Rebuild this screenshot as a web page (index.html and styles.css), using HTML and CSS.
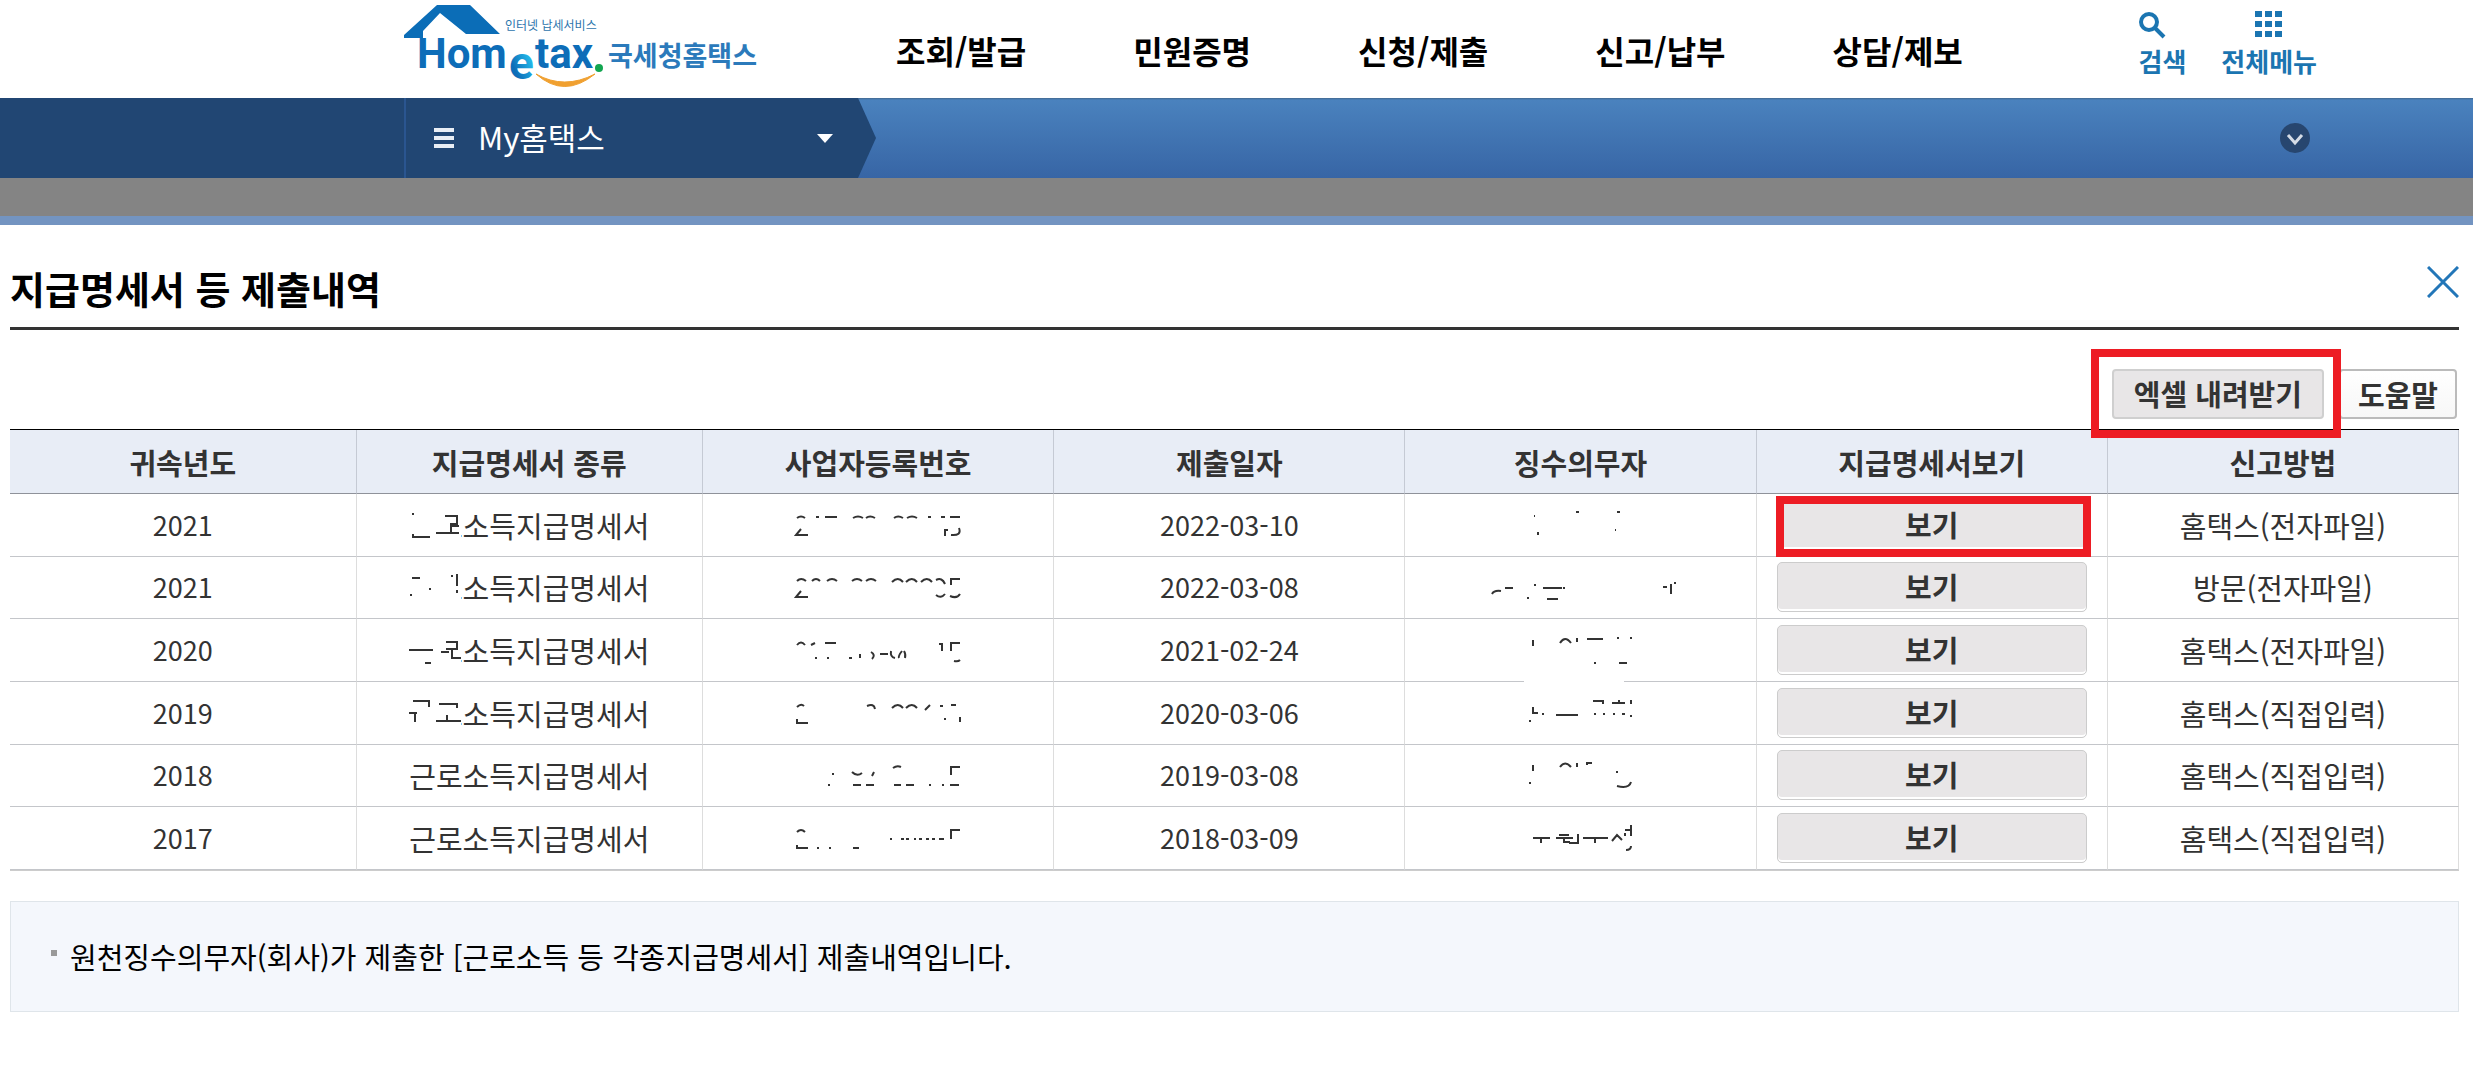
FILE: index.html
```html
<!DOCTYPE html>
<html lang="ko">
<head>
    <meta charset="UTF-8">
    <title>국세청홈택스</title>
    <link rel="stylesheet" href="styles.css">
</head>
<body>
<header class="header">
    <a href="#" class="logo">
        <svg width="360" height="98" viewBox="0 0 360 98">
            <defs>
                <linearGradient id="e" x1="0" y1="1" x2="1" y2="0">
                    <stop offset="0.3" stop-color="#0d6db8"/>
                    <stop offset="0.7" stop-color="#22b4e6"/>
                </linearGradient>
            </defs>
            <path d="M0 38V35L33 5H66L96 34H62L36 13L19 31V38Z" fill="#0b6db7"/>
            <text class="logo-en" x="13" y="68">Hom</text>
            <text class="logo-en logo-e" x="105" y="79">e</text>
            <text class="logo-en" x="131" y="68">tax</text>
            <circle cx="195" cy="68" r="4" fill="#12a650"/>
            <path d="M132 74Q160 99 191 74Q160 90 132 74Z" fill="#f0a030" stroke="#f0a030"/>
            <text class="logo-sub" x="101" y="30">인터넷 납세서비스</text>
            <text class="logo-ko" x="204" y="66">국세청홈택스</text>
        </svg>
    </a>
    <nav class="gnb">
        <a href="#">조회/발급</a>
        <a href="#">민원증명</a>
        <a href="#">신청/제출</a>
        <a href="#">신고/납부</a>
        <a href="#">상담/제보</a>
    </nav>
    <div class="util">
        <a href="#">
            <svg class="search" width="28" height="28" viewBox="0 0 28 28"><circle cx="11" cy="11" r="8" fill="none" stroke="#1b75b1" stroke-width="4"/><path d="M17 17L26 26" stroke="#1b75b1" stroke-width="4"/></svg>
            <span>검색</span>
        </a>
        <a href="#">
            <svg width="28" height="28" viewBox="0 0 28 28"><path d="M0 0h7v6H0zM10 0h7v6h-7zM20 0h7v6h-7zM0 10h7v6H0zM10 10h7v6h-7zM20 10h7v6h-7zM0 20h7v6H0zM10 20h7v6h-7zM20 20h7v6h-7z" fill="#1b75b1"/></svg>
            <span>전체메뉴</span>
        </a>
    </div>
</header>

<div class="bar">
    <button type="button" class="my">
        <svg width="20" height="20" viewBox="0 0 20 20"><path d="M0 0h20v4H0zM0 8h20v4H0zM0 16h20v4H0z" fill="#e9eef5"/></svg>
        <span>My홈택스</span>
        <svg class="caret" width="16" height="9" viewBox="0 0 16 9"><path d="M0 0H16L8 9Z" fill="#fff"/></svg>
    </button>
    <button type="button" class="fold" aria-label="펼치기">
        <svg width="30" height="30" viewBox="0 0 30 30"><circle cx="15" cy="15" r="15" fill="#27466f"/><path d="M8 12L15 20L22 12" fill="none" stroke="#d5dce6" stroke-width="3"/></svg>
    </button>
</div>
<div class="dim"></div>

<main class="popup">
    <div class="title">
        <h1>지급명세서 등 제출내역</h1>
        <button type="button" class="close" aria-label="닫기">
            <svg width="32" height="32" viewBox="0 0 32 32"><path d="M1 1L31 31M31 1L1 31" stroke="#2276b8" stroke-width="3"/></svg>
        </button>
    </div>

    <div class="btns">
        <div class="mark mark-excel"><button type="button" class="btn">엑셀 내려받기</button></div>
        <button type="button" class="btn help">도움말</button>
    </div>

    <table class="list">
        <colgroup>
            <col class="first"><col class="first"><col><col><col><col><col>
        </colgroup>
        <thead>
        <tr>
            <th>귀속년도</th>
            <th>지급명세서 종류</th>
            <th>사업자등록번호</th>
            <th>제출일자</th>
            <th>징수의무자</th>
            <th>지급명세서보기</th>
            <th>신고방법</th>
        </tr>
        </thead>
        <tbody>
        <tr>
            <td class="num">2021</td>
            <td><span class="kind">근로소득지급명세서<svg class="hide" width="60" height="42" viewBox="0 0 60 42"><path class="wipe" d="M0 0H52V42H0Z"/><path d="M4 9v2M4 30V33H21M36 12H48V20H42V28M42 22H50M27 29H50"/></svg></span></td>
            <td><svg class="rest" width="170" height="40" viewBox="0 0 170 40"><path d="M4 13Q8 10 12 13M23 12h3M32 12h12M60 13Q65 10 70 13M73 13Q77 10 82 13M101 13Q105 10 110 13M114 13Q119 10 124 13M135 12h3M148 12h4M157 12h10M8 24L3 30H15M152 31V25h3M166 23Q169 31 158 30"/></svg></td>
            <td class="num">2022-03-10</td>
            <td><svg class="rest" width="200" height="40" viewBox="0 0 200 40"><path d="M53 11h1M95 7h3M136 7h3M57 27v3M134 25h1"/></svg></td>
            <td class="view"><div class="mark mark-view"><button type="button" class="btn">보기</button></div></td>
            <td>홈택스(전자파일)</td>
        </tr>
        <tr>
            <td class="num">2021</td>
            <td><span class="kind">근로소득지급명세서<svg class="hide" width="60" height="42" viewBox="0 0 60 42"><path class="wipe" d="M0 0H52V42H0Z"/><path d="M3 12H11M1 29h2M20 23h2M42 10h2M48 8V20M48 24v3"/></svg></span></td>
            <td><svg class="rest" width="170" height="40" viewBox="0 0 170 40"><path d="M4 14Q8 10 13 14M19 14Q23 10 27 14M34 14Q39 10 44 14M59 14Q64 10 69 14M73 14Q78 10 83 14M99 15Q105 9 110 15M113 15Q119 9 124 15M128 15Q134 9 139 15M143 13Q149 10 152 17M167 12H158V18M8 24L3 30H15M143 28Q148 32 152 27M157 29Q164 32 167 27"/></svg></td>
            <td class="num">2022-03-08</td>
            <td><svg class="rest" width="200" height="40" viewBox="0 0 200 40"><path d="M11 27Q13 23 20 24M24 21h8M53 18h2M62 21h19M82 21h2M46 31h2M66 32h11M182 20h4M190 17v10M193 16h2"/></svg></td>
            <td class="view"><button type="button" class="btn">보기</button></td>
            <td>방문(전자파일)</td>
        </tr>
        <tr>
            <td class="num">2020</td>
            <td><span class="kind">근로소득지급명세서<svg class="hide" width="60" height="42" viewBox="0 0 60 42"><path class="wipe" d="M0 0H52V42H0Z"/><path d="M0 21H24M16 34h6M37 13H48V20H37M32 23H40M43 20V29H52"/></svg></span></td>
            <td><svg class="rest" width="170" height="40" viewBox="0 0 170 40"><path d="M4 15Q8 10 12 15M18 15l4-2M32 13h11M23 27v2M35 27v2M56 28h3M67 24v4M78 22Q83 25 79 29M87 24h8M98 21Q97 27 102 28M109 21Q105 26 106 28M111 21Q113 24 112 28M146 14h3v7M167 13H158V21M161 31Q165 32 167 30"/></svg></td>
            <td class="num">2021-02-24</td>
            <td><svg class="rest" width="200" height="40" viewBox="0 0 200 40"><path d="M52 10v6M79 13Q84 5 90 13M96 8v4M106 9h16M136 8h2M149 8h2M113 33h2M138 33h8"/><path class="wipe" d="M43 49h100v4H43z"/></svg></td>
            <td class="view"><button type="button" class="btn">보기</button></td>
            <td>홈택스(전자파일)</td>
        </tr>
        <tr>
            <td class="num">2019</td>
            <td><span class="kind">근로소득지급명세서<svg class="hide" width="60" height="42" viewBox="0 0 60 42"><path class="wipe" d="M0 0H52V42H0Z"/><path d="M4 9H20V15M0 21H8M6 21V30M30 12H48V16M38 23V28M27 29H52"/></svg></span></td>
            <td><svg class="rest" width="170" height="40" viewBox="0 0 170 40"><path d="M4 14Q8 10 11 13M4 26V30H15M74 13Q81 10 82 16M99 15Q105 9 110 15M113 15Q119 9 124 15M132 17L137 12M147 13h3M158 12h5M151 26h2M167 24v5"/></svg></td>
            <td class="num">2020-03-06</td>
            <td><svg class="rest" width="200" height="40" viewBox="0 0 200 40"><path d="M52 14v6h5M49 27v2M61 21h2M75 22h22M113 21h2M122 21h2M112 8h10v3M131 10h13M138 7v3M150 7v4M132 21h2M141 21h3M149 23h2"/></svg></td>
            <td class="view"><button type="button" class="btn">보기</button></td>
            <td>홈택스(직접입력)</td>
        </tr>
        <tr>
            <td class="num">2018</td>
            <td>근로소득지급명세서</td>
            <td><svg class="rest" width="170" height="40" viewBox="0 0 170 40"><path d="M39 19h2M59 17Q64 22 69 18M81 17l-2 4M100 13Q104 10 108 12M167 12H158V20M35 30h2M60 30h8M73 30h8M101 30h7M113 30h8M136 30h2M149 30h2M157 30h9"/></svg></td>
            <td class="num">2019-03-08</td>
            <td><svg class="rest" width="200" height="40" viewBox="0 0 200 40"><path d="M52 10v6M49 27v2M79 12Q84 5 90 12M96 8v4M106 10V8h5M135 17h2M136 31Q148 34 150 27"/></svg></td>
            <td class="view"><button type="button" class="btn">보기</button></td>
            <td>홈택스(직접입력)</td>
        </tr>
        <tr>
            <td class="num">2017</td>
            <td>근로소득지급명세서</td>
            <td><svg class="rest" width="170" height="40" viewBox="0 0 170 40"><path d="M4 14Q8 10 12 14M4 27V30H15M24 30h2M36 30h2M60 30h6M97 21h2M108 21h3M113 21h3M121 21h2M126 21h3M133 21h3M139 21h3M146 21h5M167 12H158V21"/></svg></td>
            <td class="num">2018-03-09</td>
            <td><svg class="rest" width="200" height="40" viewBox="0 0 200 40"><path d="M52 20h17M60 20v5M75 20h17M78 17h10M83 20v4h6M97 16v9h-9M102 20h25M114 20v5M131 23L136 17L141 22M144 12h6M150 7v11M144 15v3M150 28Q150 32 145 32"/></svg></td>
            <td class="view"><button type="button" class="btn">보기</button></td>
            <td>홈택스(직접입력)</td>
        </tr>
        </tbody>
    </table>

    <ul class="notice">
        <li>원천징수의무자(회사)가 제출한 [근로소득 등 각종지급명세서] 제출내역입니다.</li>
    </ul>
</main>
</body>
</html>
```

FILE: styles.css
```css
body, h1, ul, li {
    margin: 0;
    padding: 0;
}

body {
    font-family: "Noto Sans CJK KR", sans-serif;
    font-size: 29px;
    line-height: 40px;
    color: #333;
    background: #fff;
}

a {
    color: inherit;
    text-decoration: none;
}

button {
    margin: 0;
    padding: 0;
    border: 0;
    background: none;
    font: inherit;
    color: inherit;
    cursor: pointer;
}

svg {
    display: block;
}

/* header */
.header {
    display: flex;
    height: 98px;
    padding: 0 156px 0 404px;
}

.logo-en {
    font: bold 42px Roboto, sans-serif;
    fill: #0d6db8;
}

.logo-e {
    font-size: 46px;
    fill: url(#e);
}

.logo-sub {
    font-size: 12px;
    fill: #2d75ad;
}

.logo-ko {
    font-size: 27px;
    font-weight: bold;
    fill: #2b7abb;
}

.gnb {
    display: flex;
    gap: 107px;
    padding: 30px 0 0 132px;
    font-size: 32px;
    font-weight: bold;
    color: #000;
}

.util {
    display: flex;
    gap: 35px;
    margin-left: auto;
    padding-top: 11px;
    font-size: 26px;
    line-height: 44px;
    font-weight: bold;
    color: #1b75b1;
}

.util a {
    display: flex;
    flex-direction: column;
    align-items: center;
}

.util .search {
    align-self: flex-start;
}

/* blue bar */
.bar {
    display: flex;
    align-items: center;
    justify-content: space-between;
    height: 80px;
    padding-right: 163px;
    background: linear-gradient(#43688f 0, #4a82be 2px, #3765a5 100%);
}

.my {
    display: flex;
    align-items: center;
    box-sizing: border-box;
    width: 876px;
    height: 80px;
    padding: 0 43px 0 434px;
    font-size: 31px;
    color: #fff;
    background: linear-gradient(#2a5590, #2a5590) 404px 0 / 2px 100% no-repeat #214673;
    clip-path: polygon(0 0, 858px 0, 100% 50%, 858px 100%, 0 100%);
}

.my span {
    padding: 0 0 3px 24px;
}

.my .caret {
    margin-left: auto;
}

.dim {
    height: 38px;
    background: #848484;
}

/* popup */
.popup {
    padding: 0 14px 0 10px;
    border-top: 9px solid #7394c1;
}

.title {
    display: flex;
    justify-content: space-between;
    height: 102px;
    border-bottom: 3px solid #333;
}

.title h1 {
    padding-top: 38px;
    font-size: 38px;
    line-height: 50px;
    color: #000;
}

.close {
    align-self: flex-start;
    margin-top: 41px;
}

.btns {
    display: flex;
    justify-content: flex-end;
    gap: 15px;
    padding: 39px 2px 10px 0;
}

.btn {
    box-sizing: border-box;
    height: 50px;
    padding: 0 20px 2px;
    border: 1px solid #ccc;
    border-radius: 5px;
    font-weight: bold;
    background: #e8e6e7;
    box-shadow: inset 0 -2px #fff;
}

.btns .btn {
    border: 2px solid #cfcfcf;
    border-radius: 4px;
    box-shadow: none;
}

.btns .help {
    padding: 0 17px;
    border-color: #bbb;
    background: linear-gradient(#fff, #f7f7f7);
}

/* red guide boxes */
.mark {
    position: relative;
}

.mark::after {
    content: "";
    position: absolute;
    border: 8px solid #ed1c24;
    z-index: 1;
}

.mark-excel::after {
    top: -20px;
    right: -17px;
    bottom: -19px;
    left: -21px;
}

.mark-view::after {
    top: -4px;
    right: -4px;
    bottom: -7px;
    left: -1px;
}

/* table */
.list {
    width: 100%;
    height: 442px;
    table-layout: fixed;
    border-spacing: 0;
    border-top: 1px solid #000;
    border-bottom: 1px solid #ccc;
    text-align: center;
}

.first {
    width: 14.15%;
}

.list th {
    height: 63px;
    padding: 0;
    border-right: 1px solid #c5cad4;
    border-bottom: 1px solid #8f929a;
    background: #e8edf6;
}

.list td {
    padding: 0;
    border-right: 1px solid #ddd;
    border-bottom: 1px solid #c4c6ca;
}

.list .num {
    font-size: 27px;
}

.list .view {
    padding: 0 20px;
}

.view .btn {
    display: block;
    width: 100%;
}

.kind {
    position: relative;
}

.hide {
    position: absolute;
    top: 0;
    left: 0;
    fill: none;
    stroke: #333;
    stroke-width: 2;
}

.rest {
    margin: 0 auto;
    overflow: visible;
    fill: none;
    stroke: #333;
    stroke-width: 2;
}

.wipe {
    fill: #fff;
    stroke: none;
}

/* notice */
.notice {
    margin-top: 30px;
    padding: 34px 40px 35px;
    border: 1px solid #dfe5ea;
    background: #f4f7fc;
    list-style: none;
    color: #000;
}

.notice li {
    padding-left: 19px;
    background: linear-gradient(#999, #999) 0 14px / 6px 6px no-repeat;
}
```
